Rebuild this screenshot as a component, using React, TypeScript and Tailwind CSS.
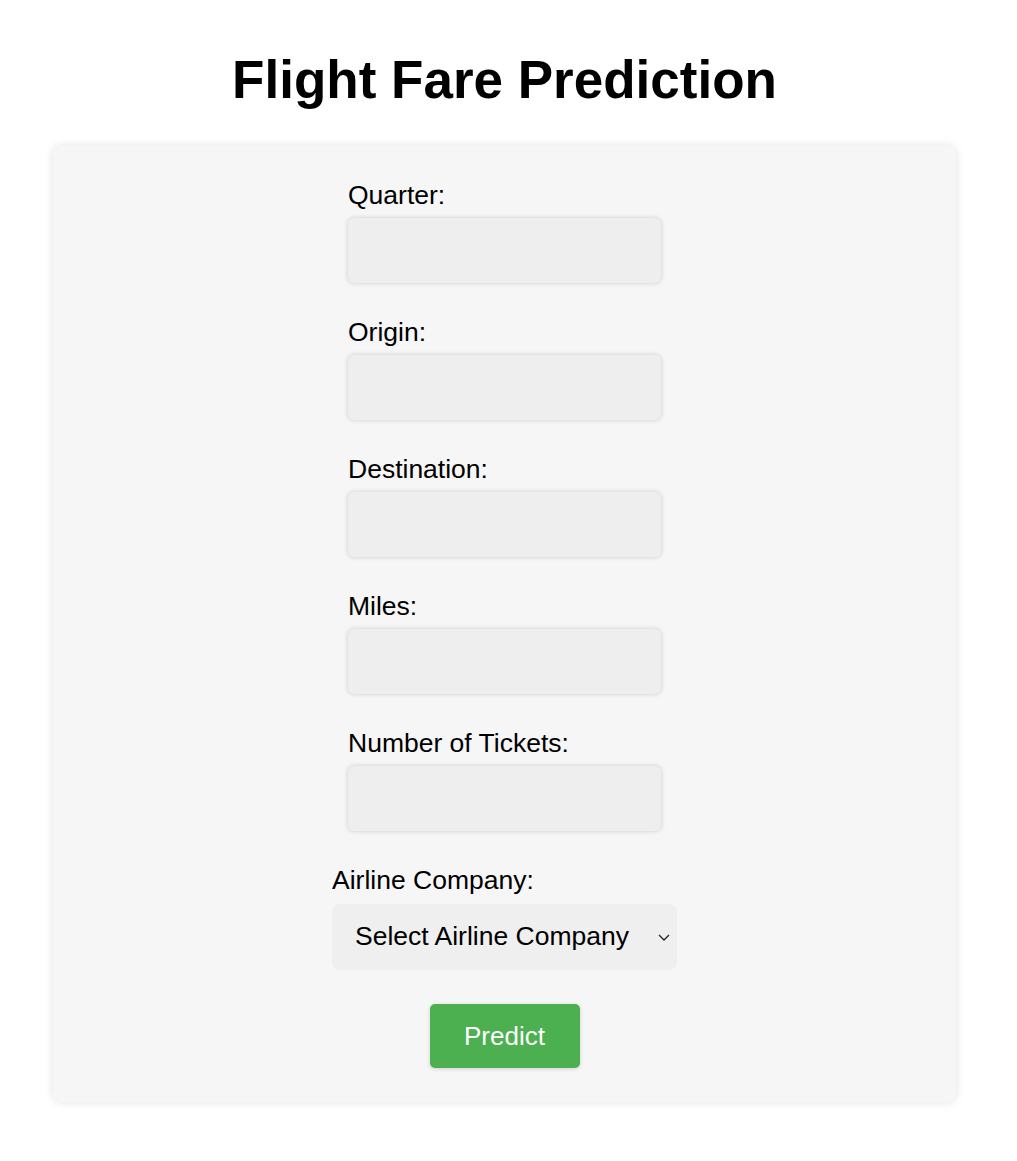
const fields = ["Quarter:", "Origin:", "Destination:", "Miles:", "Number of Tickets:"];

export default function App() {
  return (
    <div className="min-h-screen bg-white font-['Liberation_Sans',Arial,sans-serif] text-black">
      <h1 className="mx-[53px] w-[903px] pt-[48px] text-center text-[53px] font-bold leading-[64px]">
        Flight Fare Prediction
      </h1>
      <div className="mx-[53px] mt-[34px] w-[903px] rounded-[8px] bg-[#f6f6f6] pt-[34px] pb-[34px] shadow-[0_0_10px_rgba(0,0,0,0.12)]">
        <form className="flex flex-col items-center">
          {fields.map((f) => (
            <div key={f} className="mb-[34px] w-[313px]">
              <label className="block h-[38px] text-[26.5px] leading-[30px]">{f}</label>
              <input
                type="text"
                className="block h-[65px] w-[313px] rounded-[6px] bg-[#eeeeee] shadow-[0_0_5px_rgba(0,0,0,0.18)] outline-none"
              />
            </div>
          ))}
          <div className="w-[345px]">
            <label className="block h-[39px] text-[26.5px] leading-[30px]">Airline Company:</label>
            <div className="relative">
              <select className="block h-[66px] w-[345px] appearance-none rounded-[8px] bg-[#efefef] pl-[23px] text-[26.5px] text-black outline-none">
                <option>Select Airline Company</option>
              </select>
              <svg
                className="pointer-events-none absolute right-[7px] top-[30px]"
                width="12"
                height="7"
                viewBox="0 0 12 7"
                fill="none"
                stroke="#222"
                strokeWidth="1.3"
              >
                <path d="M1 1l5 5 5-5" />
              </svg>
            </div>
          </div>
          <button
            type="button"
            className="mt-[34px] h-[64px] w-[150px] rounded-[5px] bg-[#4caf50] text-[26px] text-white shadow-[0_1px_4px_rgba(0,0,0,0.15)]"
          >
            Predict
          </button>
        </form>
      </div>
    </div>
  );
}
